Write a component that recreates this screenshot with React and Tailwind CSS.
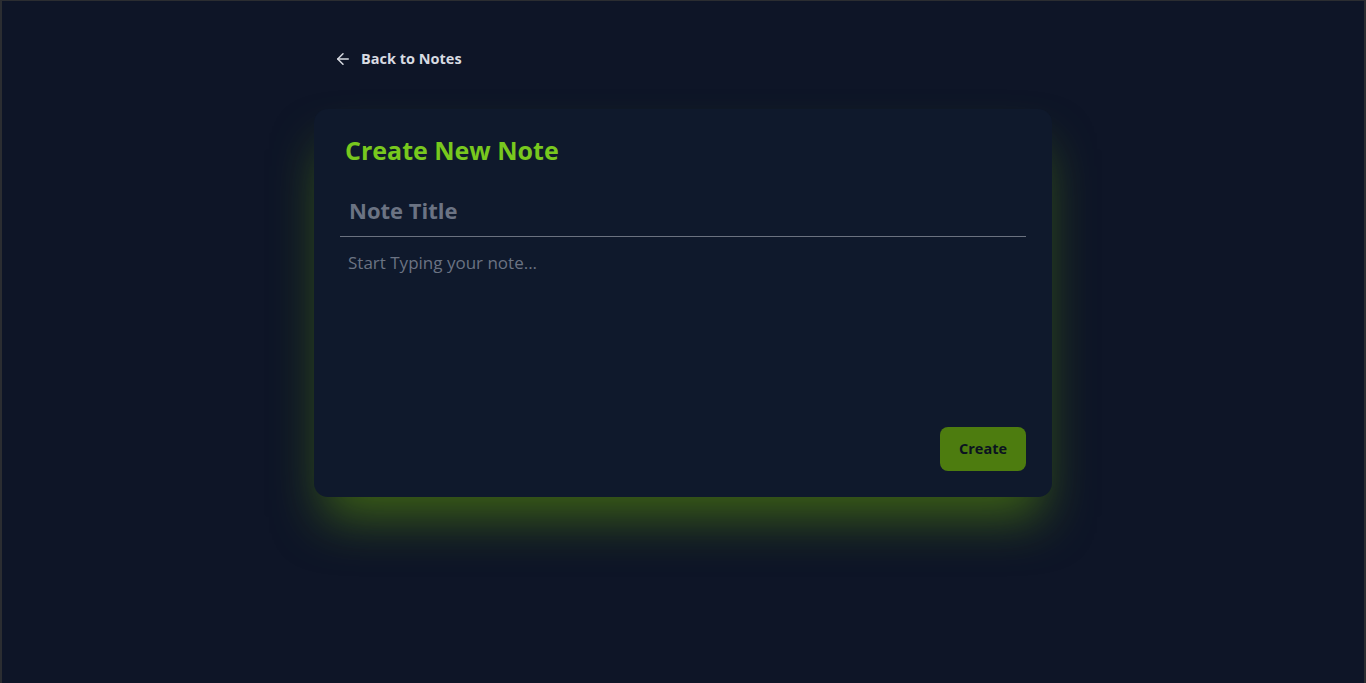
import React from "react";

export default function App() {
  return (
    <div
      className="min-h-[683px] h-[683px] w-full bg-[#0e1527] border-t border-l-2 border-r-2 border-[#2b2d31] overflow-hidden"
      style={{ fontFamily: '"Open Sans", "Noto Sans", sans-serif' }}
    >
      <div className="mx-auto w-[738px] pt-[47px]">
        <button className="flex items-center gap-[9px] ml-[20px] text-[#d8dbe2] text-[14.5px] font-bold">
          <svg width="18" height="18" viewBox="0 0 24 24" fill="none" stroke="currentColor" strokeWidth="2" strokeLinecap="round" strokeLinejoin="round">
            <path d="M19 12H5" />
            <path d="M12 19l-7-7 7-7" />
          </svg>
          <span>Back to Notes</span>
        </button>
        <div className="mt-[39px] rounded-[14px] bg-[#0f192c] px-[26px] pt-[23px] pb-[26px] shadow-[0_30px_50px_-10px_rgba(77,124,15,0.75)]">
          <h1 className="px-[5px] text-[25px] leading-[36px] font-bold text-[#78c81e]">Create New Note</h1>
          <input
            placeholder="Note Title"
            className="mt-[26px] w-full bg-transparent border-b border-[#6b7280] px-[9px] pb-[10px] text-[22px] leading-[32px] font-bold text-[#6b7383] placeholder-[#6b7383] outline-none"
          />
          <textarea
            placeholder="Start Typing your note..."
            className="mt-[13px] w-full h-[159px] resize-none bg-transparent px-[8px] text-[17px] text-[#6b7383] placeholder-[#6b7383] outline-none"
          />
          <div className="flex justify-end mt-[12px]">
            <button className="h-[44px] w-[86px] rounded-[8px] bg-[#4d7c0f] text-[14.5px] font-bold text-[#0b1220]">Create</button>
          </div>
        </div>
      </div>
    </div>
  );
}
